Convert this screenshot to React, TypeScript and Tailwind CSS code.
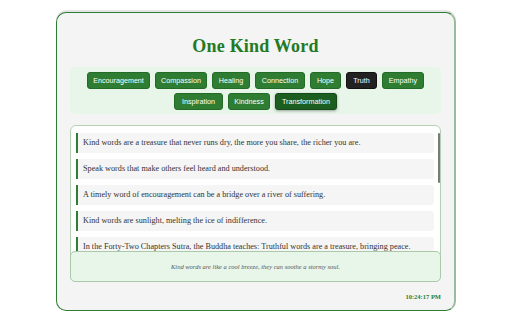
import { useState } from 'react';

const categories = [
  { name: 'Encouragement', w: 'w-[63px]' },
  { name: 'Compassion', w: 'w-[52px]' },
  { name: 'Healing', w: 'w-[38px]' },
  { name: 'Connection', w: 'w-[50px]' },
  { name: 'Hope', w: 'w-[31px]' },
  { name: 'Truth', w: 'w-[31px]' },
  { name: 'Empathy', w: 'w-[42px]' },
  { name: 'Inspiration', w: 'w-[49px]' },
  { name: 'Kindness', w: 'w-[42px]' },
  { name: 'Transformation', w: 'w-[62px]' },
];

const words = [
  'Kind words are a treasure that never runs dry, the more you share, the richer you are.',
  'Speak words that make others feel heard and understood.',
  'A timely word of encouragement can be a bridge over a river of suffering.',
  'Kind words are sunlight, melting the ice of indifference.',
  'In the Forty-Two Chapters Sutra, the Buddha teaches: Truthful words are a treasure, bringing peace.',
];

export default function App() {
  const [active, setActive] = useState('Transformation');
  const hovered = 'Truth';

  const btnClass = (name: string) => {
    if (name === active) return 'bg-[#1b5e20] border-[#154a19] shadow-[0_1px_3px_rgba(0,0,0,0.35)]';
    if (name === hovered) return 'bg-[#222222] border-[#111111]';
    return 'bg-[#2e7d32] border-[#236b27]';
  };

  return (
    <div className="w-[512px] h-[320px] bg-white pt-[12px] pl-[56px] overflow-hidden">
      <div className="w-[400px] h-[299px] rounded-[10px] border border-[#2e7d32] border-r-2 border-r-[#9cbb9c] bg-[#f4f4f4] shadow-[0_-2px_0_#e4e4e4] px-[13px] pt-[22px] flex flex-col">
        {/* Title */}
        <h1 className="h-[22px] leading-[22px] text-center text-[18px] font-bold text-[#237a23] font-['Liberation_Serif',serif] tracking-[0.2px]">
          One Kind Word
        </h1>

        {/* Categories */}
        <div className="mt-[10px] rounded-[5px] bg-[#e8f5e9] pt-[5px] pb-[4px] flex flex-wrap justify-center gap-x-[5px] gap-y-[4px]">
          {categories.map(c => (
            <button
              key={c.name}
              onClick={() => setActive(c.name)}
              className={`${c.w} h-[17px] rounded-[3px] border text-white text-[7.2px] leading-none font-['Liberation_Sans',sans-serif] flex items-center justify-center ${btnClass(c.name)}`}
            >
              {c.name}
            </button>
          ))}
        </div>

        {/* Words list */}
        <div className="mt-[11px] h-[136px] rounded-[6px] border border-[#b5cfb5] bg-white pt-[7px] pl-[5px] flex overflow-hidden">
          <div className="w-[358px] flex flex-col gap-[6px]">
            {words.map(w => (
              <div
                key={w}
                className="h-[20px] shrink-0 bg-[#f5f5f5] border-l-2 border-[#2e7d32] rounded-r-[3px] pl-[5px] flex items-center whitespace-nowrap text-[8.2px] text-[#333333] font-['Liberation_Serif',serif]"
              >
                {w}
              </div>
            ))}
          </div>
          <div className="ml-[4px] w-[2px] h-[50px] bg-[#7a7a7a] rounded-full" />
        </div>

        {/* Quote of the moment */}
        <div className="relative z-10 -mt-[10px] h-[31px] rounded-[5px] border border-[#a9c9a9] bg-[#e8f5e9] flex items-center justify-center text-[6.5px] italic text-[#555555] font-['Liberation_Serif',serif]">
          Kind words are like a cool breeze, they can soothe a stormy soul.
        </div>

        <div className="mt-[10px] text-right text-[6.5px] font-bold text-[#2e7d32] font-['Liberation_Serif',serif] leading-[9px]">
          10:24:17 PM
        </div>
      </div>
    </div>
  );
}
